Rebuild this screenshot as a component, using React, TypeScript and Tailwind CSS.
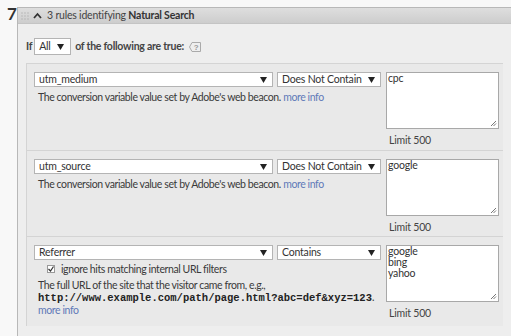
import React from "react";

const font = { fontFamily: "Lato, 'Open Sans', sans-serif" };

function Arrow() {
  return (
    <svg width="7" height="6" viewBox="0 0 7 6" className="shrink-0">
      <path d="M0 0 H7 L3.5 6 Z" fill="#222" />
    </svg>
  );
}

function Select({ text, w }: { text: string; w: string }) {
  return (
    <div
      className={`${w} h-[15px] bg-white border border-[#b4b4b4] flex items-center justify-between pl-[4px] pr-[5px] text-[10.5px] tracking-[-0.2px] leading-none text-[#333] whitespace-nowrap overflow-hidden`}
    >
      <span>{text}</span>
      <Arrow />
    </div>
  );
}

function Textarea({ lines }: { lines: string[] }) {
  return (
    <div className="flex flex-col">
      <div className="relative w-[113px] h-[57px] bg-white border border-[#a8a8a8] pl-[1px] text-[10.5px] tracking-[-0.2px] leading-[11px] text-[#333]">
        {lines.map((l) => (
          <div key={l}>{l}</div>
        ))}
        <svg width="7" height="7" viewBox="0 0 7 7" className="absolute right-[1px] bottom-[1px]">
          <path d="M6 1 L1 6 M6 3.5 L3.5 6" stroke="#555" strokeWidth="0.8" />
        </svg>
      </div>
      <div className="pl-[3px] pt-[4px] text-[10.5px] tracking-[-0.2px] leading-[14px] text-[#444]">Limit 500</div>
    </div>
  );
}

function Rule({
  name,
  op,
  lines,
  children,
  h,
}: {
  name: string;
  op: string;
  lines: string[];
  children: React.ReactNode;
  h: string;
}) {
  return (
    <div className={`${h} bg-[#e9e9e9] border-t border-l border-[#d4d4d4] pl-[7px] pt-[8px] flex gap-[5px]`}>
      <div className="w-[347px] flex flex-col">
        <div className="flex gap-[4px]">
          <Select text={name} w="w-[239px]" />
          <Select text={op} w="w-[104px]" />
        </div>
        {children}
      </div>
      <Textarea lines={lines} />
    </div>
  );
}

const Desc = ({ children }: { children: React.ReactNode }) => (
  <div className="pl-[4px] pt-[4px] text-[10.5px] tracking-[-0.4px] leading-[12px] text-[#3a3a3a] whitespace-nowrap">
    {children}
  </div>
);

const More = () => <span className="text-[#5f79b8]">more info</span>;

export default function App() {
  return (
    <div className="w-[511px] h-[336px] overflow-hidden bg-[#f8f8f8] flex" style={font}>
      <div className="w-[17px] pt-[6px] pl-[7px] text-[17px] font-bold leading-[16px] text-[#333]">7</div>
      <div className="flex-1 mt-[7px] border-l border-t border-[#b8b8b8] bg-[#eeeeee] flex flex-col">
        <div className="h-[16px] bg-gradient-to-b from-[#dedede] to-[#cdcdcd] border-b border-[#c4c4c4] flex items-center text-[10.5px] tracking-[-0.2px] text-[#444]">
          <svg width="8" height="8" viewBox="0 0 8 8" className="ml-[3px]">
            {[1, 4, 7].map((x) =>
              [1, 4, 7].map((y) => <rect key={`${x}-${y}`} x={x - 0.6} y={y - 0.6} width="1.2" height="1.2" fill="#b0b0b0" />)
            )}
          </svg>
          <svg width="9" height="7" viewBox="0 0 9 7" className="ml-[4px]">
            <path d="M1 6 L4.5 2 L8 6" stroke="#333" strokeWidth="1.8" fill="none" />
          </svg>
          <span className="ml-[5px]">
            3 rules identifying <b className="text-[#333]">Natural Search</b>
          </span>
        </div>
        <div className="px-[8px] pt-[14px]">
          <div className="flex items-center h-[17px] text-[10.5px] tracking-[-0.25px] font-bold text-[#444]">
            <span>If</span>
            <div className="ml-[2px] w-[37px] h-[17px] bg-white border border-[#b4b4b4] flex items-center justify-between pl-[4px] pr-[6px] font-normal text-[#333]">
              <span>All</span>
              <Arrow />
            </div>
            <span className="ml-[4px]">of the following are true:</span>
            <svg width="12" height="10" viewBox="0 0 12 10" className="ml-[5px]">
              <path d="M3 0.5 H11.5 V9.5 H3 L0.5 5 Z" fill="none" stroke="#aaa" strokeWidth="1" />
              <text x="7" y="8" fontSize="8" textAnchor="middle" fill="#999" fontFamily="Arial">?</text>
            </svg>
          </div>
          <div className="mt-[8px] flex flex-col">
            <Rule name="utm_medium" op="Does Not Contain" lines={["cpc"]} h="h-[87px]">
              <Desc>
                The conversion variable value set by Adobe's web beacon. <More />
              </Desc>
            </Rule>
            <Rule name="utm_source" op="Does Not Contain" lines={["google"]} h="h-[86px]">
              <Desc>
                The conversion variable value set by Adobe's web beacon. <More />
              </Desc>
            </Rule>
            <Rule name="Referrer" op="Contains" lines={["google", "bing", "yahoo"]} h="h-[90px]">
              <div className="flex items-center pl-[13px] pt-[3px] text-[10.5px] tracking-[-0.4px] leading-[12px] text-[#3a3a3a]">
                <span className="w-[8px] h-[8px] border border-[#999] bg-white flex items-center justify-center">
                  <svg width="6" height="6" viewBox="0 0 6 6">
                    <path d="M0.5 3 L2.5 5 L5.5 0.5" stroke="#333" strokeWidth="1.2" fill="none" />
                  </svg>
                </span>
                <span className="ml-[6px]">ignore hits matching internal URL filters</span>
              </div>
              <Desc>
                The full URL of the site that the visitor came from, e.g.,
                <br />
                <span
                  className="font-bold text-[10.5px] tracking-normal text-[#222]"
                  style={{ fontFamily: "'Liberation Mono', monospace" }}
                >
                  http://www.example.com/path/page.html?abc=def&amp;xyz=123
                </span>
                .
                <br />
                <More />
              </Desc>
            </Rule>
          </div>
        </div>
      </div>
    </div>
  );
}
